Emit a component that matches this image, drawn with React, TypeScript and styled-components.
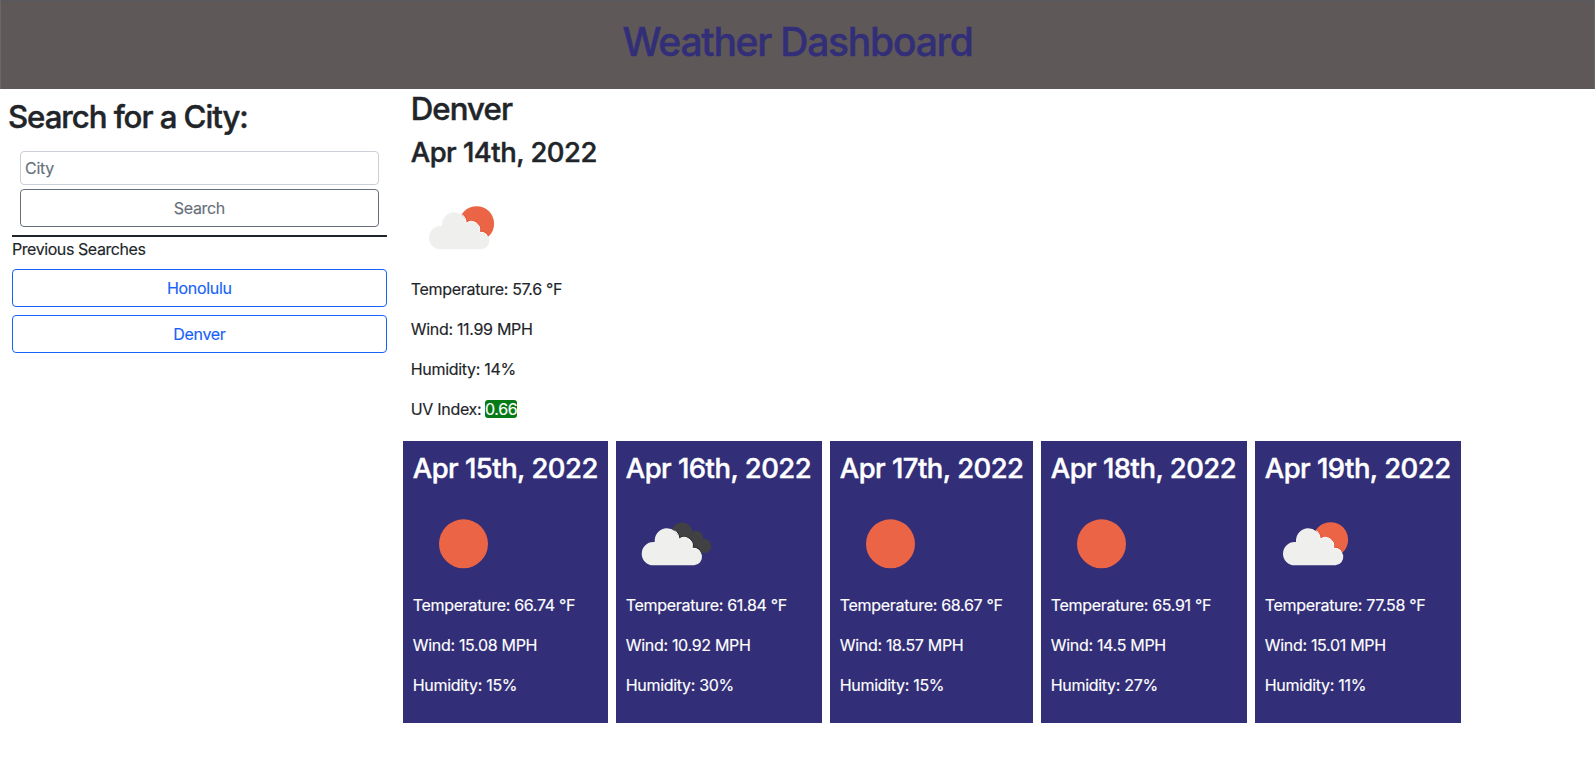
import React from "react";
import styled, { createGlobalStyle } from "styled-components";

const Global = createGlobalStyle`
  *, *::before, *::after { box-sizing: border-box; }
  body {
    margin: 0;
    background: #fff;
    color: #212529;
    font-family: Inter, "Liberation Sans", sans-serif;
    font-size: 16px;
    font-weight: 400;
    line-height: 1.5;
    letter-spacing: -0.31px;
    -webkit-text-stroke-width: 0.15px;
  }
  h1, h2, h3 {
    margin: 0;
    font-weight: 500;
    white-space: nowrap;
    -webkit-text-stroke-width: 0.45px;
  }
  p { margin: 0 0 16px; white-space: nowrap; }
`;

const Header = styled.header`
  height: 89px;
  padding: 17px 16px;
  background: #5f5858;
  border: 1px solid #6c6767;
  border-top-color: #57595e;
  border-bottom: 0;
  text-align: center;
`;

const Title = styled.h1`
  color: #322e78;
  font-size: 39px;
  line-height: 48px;
  letter-spacing: -1.24px;
`;

const Layout = styled.div`
  display: flex;
`;

const Sidebar = styled.aside`
  width: 398.75px;
  flex: none;
`;

const SearchTitle = styled.h2`
  padding: 9px 8px 7px;
  font-size: 31.2px;
  line-height: 38.4px;
  letter-spacing: -1.05px;
`;

const SearchForm = styled.form`
  display: flex;
  flex-direction: column;
  gap: 4px;
  margin: 0 12px;
  padding: 8px 8px;
  border-bottom: 2px solid #212529;
`;

const CityInput = styled.input`
  height: 34px;
  padding: 1px 4px;
  border: 1px solid #cacfda;
  border-radius: 4px;
  color: #212529;
  font: inherit;
  letter-spacing: inherit;
  &::placeholder { color: #666f79; opacity: 1; }
`;

const Button = styled.button<{ $tone: string }>`
  width: 100%;
  height: 38px;
  padding: 6px 12px;
  border: 1px solid ${(p) => p.$tone};
  border-radius: 4px;
  background: transparent;
  color: ${(p) => p.$tone};
  font: inherit;
  letter-spacing: inherit;
`;

const History = styled.div`
  display: flex;
  flex-direction: column;
  gap: 8px;
  margin: 0 12px;
`;

const HistoryLabel = styled.span`
  letter-spacing: -0.43px;
`;

const Main = styled.main`
  flex: 1;
`;

const Current = styled.section`
  padding: 0 12px;
`;

const CityName = styled.h2`
  padding: 1px 0 7px;
  font-size: 31.2px;
  line-height: 38.4px;
  letter-spacing: -0.92px;
`;

const DateTitle = styled.h3`
  padding: 1px 0 7px;
  font-size: 27.4px;
  line-height: 33.6px;
  letter-spacing: -0.5px;
`;

const UvBadge = styled.span`
  display: inline-block;
  height: 18px;
  margin-left: -0.5px;
  border-radius: 3px;
  background: #077a18;
  color: #fff;
  line-height: 18px;
`;

const Forecast = styled.section`
  display: flex;
  gap: 8px;
  padding: 4px;
`;

const Card = styled.article<{ $width: number }>`
  width: ${(p) => p.$width}px;
  height: 282px;
  padding: 10px;
  background: #322e78;
  color: #fff;
`;

const Icon = styled.svg`
  display: block;
  width: 100px;
  height: 100px;
`;

type Sky = "sun" | "partly" | "clouds";

const CLOUD =
  "M29.6 72.3A11.6 11.6 0 0 1 29.6 49.1H31V46.7A12.2 12.2 0 0 1 55.3 46.2A8.2 8.2 0 0 1 68.2 55.2A8.63 8.63 0 1 1 70.4 72.3Z";
const CLOUD_RIM =
  "M51.5 37.6A12.2 12.2 0 0 1 55.3 46.2A8.2 8.2 0 0 1 68.2 55.2A8.7 8.7 0 0 1 76 57.9";

function Cloud({ shade }: { shade: string }) {
  return (
    <>
      <path d={CLOUD_RIM} fill="none" stroke={shade} strokeWidth="2.4" />
      <path d={CLOUD} fill="#efefed" />
      <path d={CLOUD_RIM} fill="none" stroke="#fff" strokeWidth="1" />
    </>
  );
}

function SkyIcon({ sky }: { sky: Sky }) {
  return (
    <Icon viewBox="0 0 100 100">
      {sky === "sun" && <circle cx="50.5" cy="50.8" r="24.5" fill="#eb6446" />}
      {sky === "partly" && (
        <>
          <circle cx="65.6" cy="46.7" r="17.5" fill="#eb6446" />
          <Cloud shade="#e4573a" />
        </>
      )}
      {sky === "clouds" && (
        <>
          <g fill="#414042">
            <circle cx="55.9" cy="40.2" r="10.7" />
            <circle cx="70" cy="44.7" r="7" />
            <circle cx="78.2" cy="53" r="7.2" />
            <path d="M56 44L66 39L78 50L76 60L58 58Z" />
          </g>
          <g transform="translate(-2.3 0)">
            <Cloud shade="#2b2a2e" />
          </g>
        </>
      )}
    </Icon>
  );
}

const days: { date: string; sky: Sky; temp: string; wind: string; humidity: string; width: number }[] = [
  { date: "Apr 15th, 2022", sky: "sun", temp: "66.74", wind: "15.08", humidity: "15", width: 205 },
  { date: "Apr 16th, 2022", sky: "clouds", temp: "61.84", wind: "10.92", humidity: "30", width: 206 },
  { date: "Apr 17th, 2022", sky: "sun", temp: "68.67", wind: "18.57", humidity: "15", width: 203 },
  { date: "Apr 18th, 2022", sky: "sun", temp: "65.91", wind: "14.5", humidity: "27", width: 206 },
  { date: "Apr 19th, 2022", sky: "partly", temp: "77.58", wind: "15.01", humidity: "11", width: 206 },
];

export default function App() {
  return (
    <>
      <Global />
      <Header>
        <Title>Weather Dashboard</Title>
      </Header>
      <Layout>
        <Sidebar>
          <SearchTitle>Search for a City:</SearchTitle>
          <SearchForm>
            <CityInput placeholder="City" />
            <Button type="button" $tone="#666f79">Search</Button>
          </SearchForm>
          <History>
            <HistoryLabel>Previous Searches</HistoryLabel>
            <Button $tone="#1762f8">Honolulu</Button>
            <Button $tone="#1762f8">Denver</Button>
          </History>
        </Sidebar>
        <Main>
          <Current>
            <CityName>Denver</CityName>
            <DateTitle>Apr 14th, 2022</DateTitle>
            <SkyIcon sky="partly" />
            <p>Temperature: 57.6 °F</p>
            <p>Wind: 11.99 MPH</p>
            <p>Humidity: 14%</p>
            <p>UV Index: <UvBadge>0.66</UvBadge></p>
          </Current>
          <Forecast>
            {days.map((d) => (
              <Card key={d.date} $width={d.width}>
                <DateTitle>{d.date}</DateTitle>
                <SkyIcon sky={d.sky} />
                <p>Temperature: {d.temp} °F</p>
                <p>Wind: {d.wind} MPH</p>
                <p>Humidity: {d.humidity}%</p>
              </Card>
            ))}
          </Forecast>
        </Main>
      </Layout>
    </>
  );
}
